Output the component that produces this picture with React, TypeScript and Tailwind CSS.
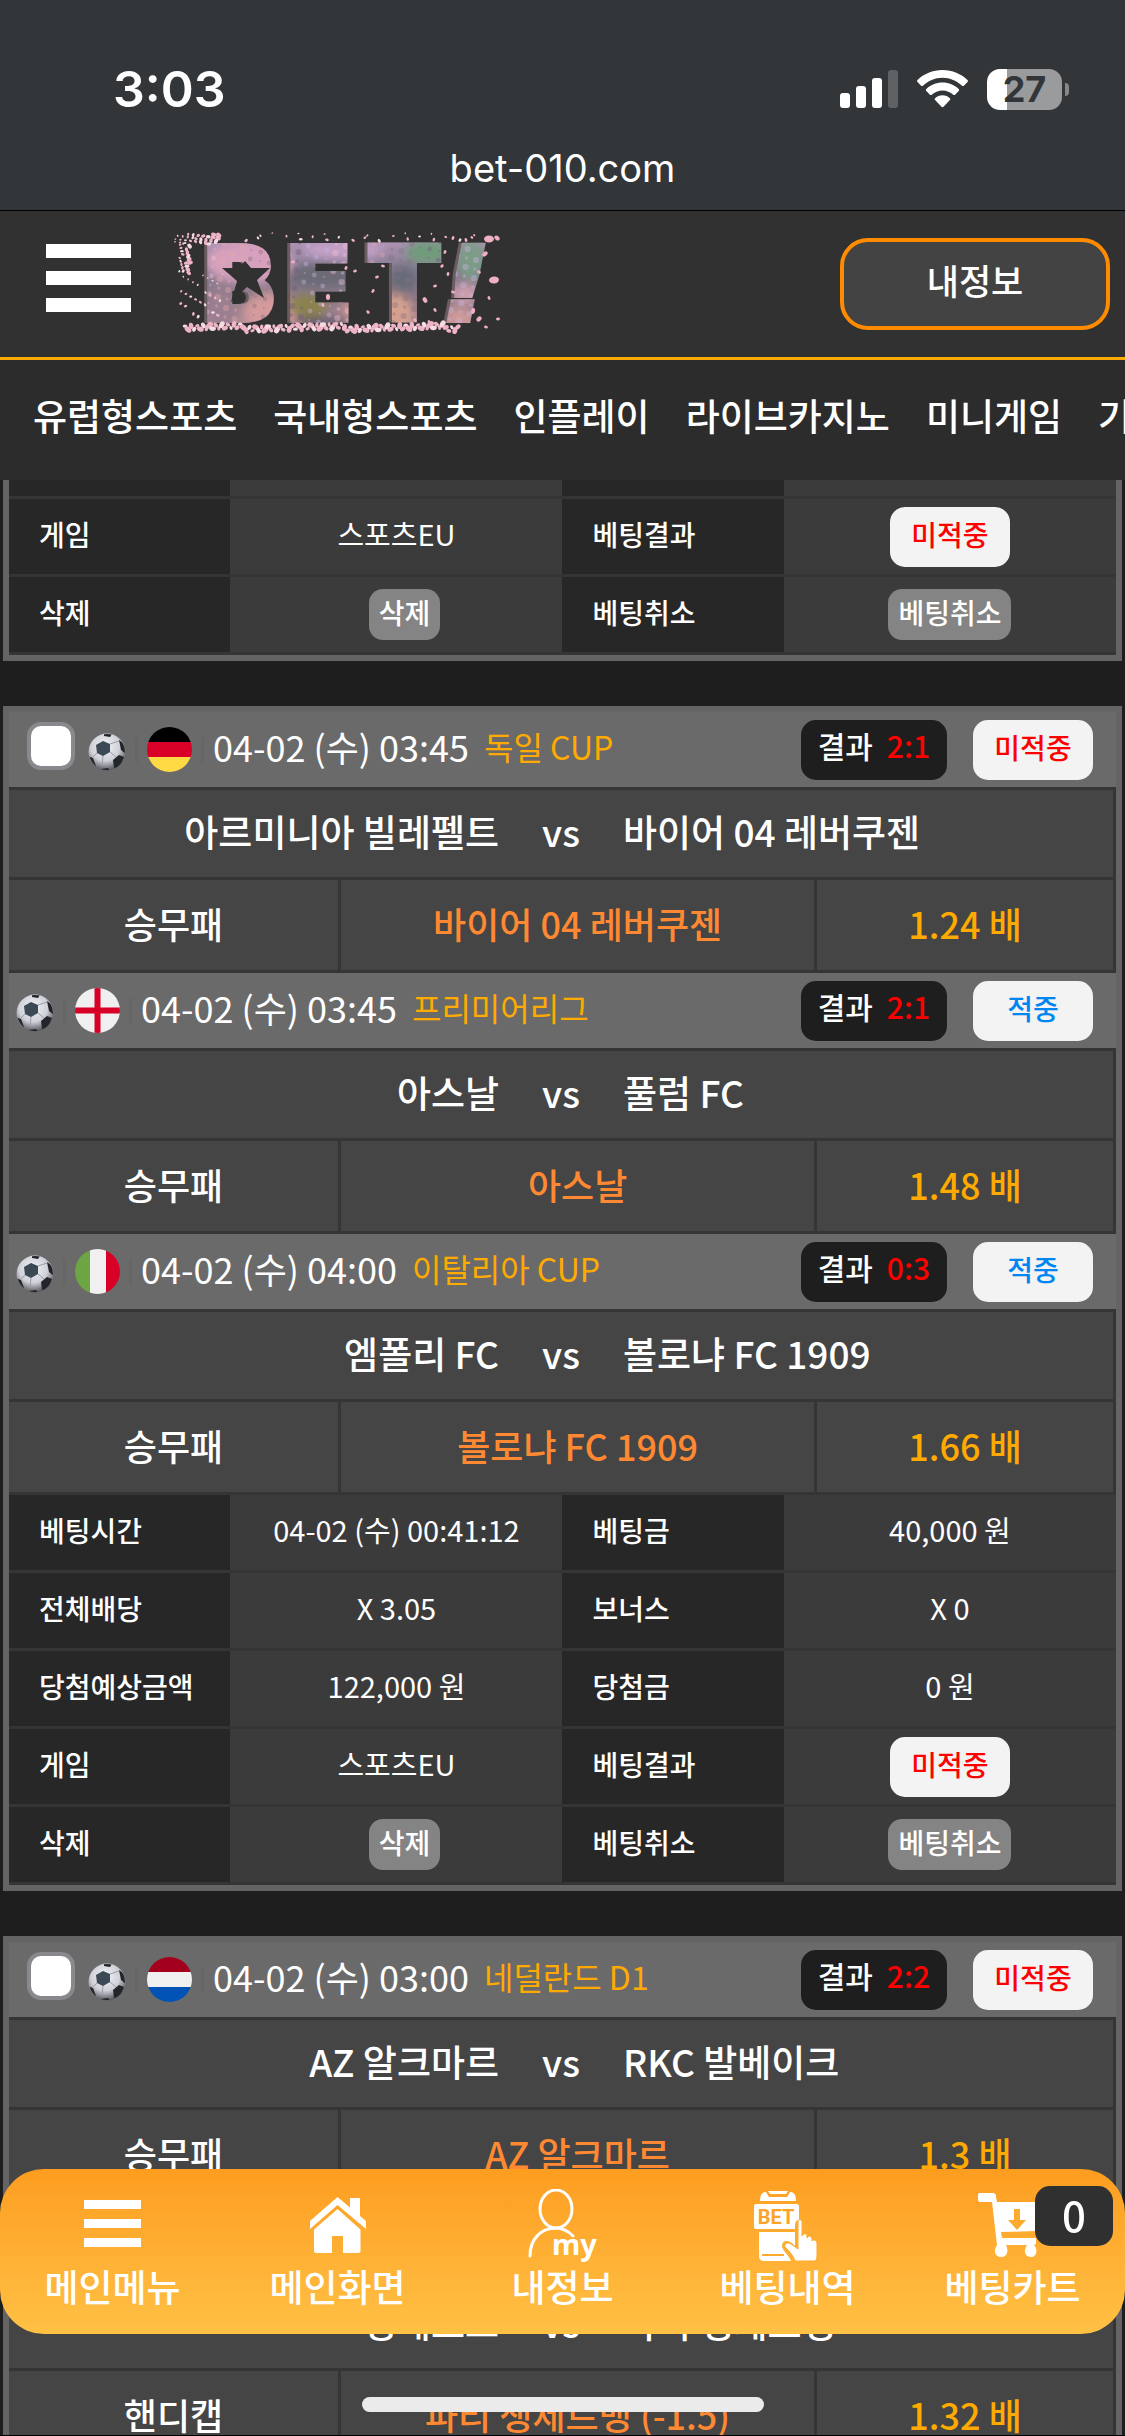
import { ReactNode } from 'react'
import { clsx } from 'clsx'

interface MatchType {
  date?: string
  league?: string
  flag?: 'de' | 'en' | 'it' | 'nl'
  score?: string
  won?: boolean
  home: string
  away: string
  market: string
  pick: string
  odds: string
}

const firstSlip: MatchType[] = [
  { date: '04-02 (수) 03:45', league: '독일 CUP', flag: 'de', score: '2:1', won: false, home: '아르미니아 빌레펠트', away: '바이어 04 레버쿠젠', market: '승무패', pick: '바이어 04 레버쿠젠', odds: '1.24' },
  { date: '04-02 (수) 03:45', league: '프리미어리그', flag: 'en', score: '2:1', won: true, home: '아스날', away: '풀럼 FC', market: '승무패', pick: '아스날', odds: '1.48' },
  { date: '04-02 (수) 04:00', league: '이탈리아 CUP', flag: 'it', score: '0:3', won: true, home: '엠폴리 FC', away: '볼로냐 FC 1909', market: '승무패', pick: '볼로냐 FC 1909', odds: '1.66' },
]

const secondSlip: MatchType[] = [
  { date: '04-02 (수) 03:00', league: '네덜란드 D1', flag: 'nl', score: '2:2', won: false, home: 'AZ 알크마르', away: 'RKC 발베이크', market: '승무패', pick: 'AZ 알크마르', odds: '1.3' },
  { home: '덩케르크', away: '파리 생제르맹', market: '핸디캡', pick: '파리 생제르맹 (-1.5)', odds: '1.32' },
]

const categories = ['유럽형스포츠', '국내형스포츠', '인플레이', '라이브카지노', '미니게임', '기타']

const StatusBar = () => (
  <div className="h-[211px] shrink-0 border-b border-black bg-[#323639] font-['Inter',sans-serif] text-white">
    <div className="flex items-center justify-between pt-[60px] pl-[113px] pr-[56px]">
      <span className="text-[50px] leading-[58px] font-semibold">3:03</span>
      <div className="flex items-center gap-[19px]">
        <svg width="58" height="38" viewBox="0 0 58 38" fill="#fff">
          <rect x="0" y="23" width="10" height="15" rx="3" />
          <rect x="16" y="16" width="10" height="22" rx="3" />
          <rect x="32" y="8" width="10" height="30" rx="3" />
          <rect x="48" y="0" width="10" height="38" rx="3" fill="#5f6264" />
        </svg>
        <svg width="51" height="38" viewBox="0 0 51 38" fill="#fff">
          <path d="M25.500 0C35.300 0 44.200 3.800 50.500 10.100c.6.600.6 1.400 0 2l-3.600 3.600c-.5.500-1.400.5-1.900 0C39.900 10.700 33 7.700 25.500 7.700S11.100 10.700 6 15.700c-.5.500-1.400.5-1.900 0L.5 12.100c-.6-.6-.6-1.400 0-2C6.800 3.800 15.700 0 25.500 0Z" />
          <path d="M25.500 12.600c6.300 0 12 2.500 16.200 6.500.6.600.6 1.500 0 2l-3.600 3.600c-.5.500-1.400.5-1.900 0-2.800-2.700-6.600-4.300-10.700-4.300s-7.900 1.600-10.700 4.300c-.5.500-1.400.5-1.900 0l-3.600-3.600c-.6-.5-.6-1.400 0-2 4.200-4 9.900-6.500 16.200-6.500Z" />
          <path d="M25.500 25.200c2.900 0 5.500 1.100 7.400 3 .6.500.6 1.400 0 1.900l-6.400 6.700c-.6.600-1.400.6-2 0l-6.400-6.700c-.6-.5-.6-1.400 0-1.900 1.900-1.900 4.500-3 7.400-3Z" />
        </svg>
        <div className="flex items-center gap-[3px]">
          <div className="flex h-[41px] w-[75px] items-center justify-center rounded-[13px] bg-linear-to-r from-white from-27% to-[#9a9b9d] to-27%">
            <span className="text-[36px] leading-[40px] font-bold text-[#323639]">27</span>
          </div>
          <div className="h-[13px] w-1 rounded-r-full bg-[#85888a]" />
        </div>
      </div>
    </div>
    <p className="pt-[26px] text-center text-[38px] leading-[48px]">bet-010.com</p>
  </div>
)

// cherry petals scattered round the logo letters
const petals = Array.from({ length: 190 }, (_, i) => {
  const a = (i * 73 + 17) % 101 / 101
  const b = (i * 47 + 29) % 97 / 97
  if (i < 90) return { x: 12 + (i / 90) * 276, y: 92 + b * 7, r: 2 + a * 2 }
  if (i < 120) return { x: 2 + a * 46, y: 2 + b * 10, r: 1 + a * 2 }
  if (i < 140) return { x: 4 + b * 14, y: 12 + a * 30, r: 1 + b * 2 }
  if (i < 165) return { x: 66 + a * 240, y: 1 + b * 8, r: 1 + b }
  return { x: 6 + a * 44, y: 42 + b * 44, r: 1 + b }
})

// blossom texture inside the letters
const speckles = Array.from({ length: 260 }, (_, i) => ({
  x: 30 + ((i * 83 + 11) % 277) * 1.05,
  y: 10 + (i * 59 + 7) % 83,
  r: 1 + (i % 4) * 0.7,
  fill: ['#f3c3d6', '#6a5a78', '#e3a7a6', '#c9b4e0', '#8a6f7c'][i % 5],
}))

const loosePetals = [
  [316, 7, 5], [324, 6, 3], [293, 8, 2], [280, 6, 2], [312, 22, 3], [321, 48, 5], [306, 40, 2], [316, 66, 2], [300, 79, 3], [306, 87, 3], [325, 87, 2],
  [313, 95, 2], [252, 68, 3], [275, 42, 2], [269, 34, 2], [262, 54, 2], [280, 60, 2], [262, 78, 2], [155, 65, 3], [200, 59, 2], [204, 45, 2], [210, 34, 2],
  [195, 80, 2], [150, 73, 2], [173, 36, 2], [182, 39, 2], [120, 30, 2], [242, 88, 2], [256, 90, 2], [272, 20, 2],
]

const Logo = () => (
  <svg width="330" height="104" viewBox="0 0 330 104" role="img" aria-label="BET!">
    <defs>
      <linearGradient id="sky" x1="0" y1="0" x2="0" y2="1">
        <stop offset="0" stopColor="#bd9cc2" />
        <stop offset="0.35" stopColor="#857c92" />
        <stop offset="0.65" stopColor="#8a7885" />
        <stop offset="1" stopColor="#c795a0" />
      </linearGradient>
      <filter id="soft"><feGaussianBlur stdDeviation="5" /></filter>
      <pattern id="blossom" width="330" height="104" patternUnits="userSpaceOnUse">
        <rect width="330" height="104" fill="url(#sky)" />
        <g filter="url(#soft)">
          <ellipse cx="76" cy="30" rx="44" ry="22" fill="#d7a0bd" />
          <ellipse cx="98" cy="80" rx="28" ry="20" fill="#d49a9c" />
          <ellipse cx="48" cy="78" rx="16" ry="24" fill="#9a7f91" />
          <ellipse cx="150" cy="44" rx="36" ry="12" fill="#6c6a76" />
          <ellipse cx="134" cy="74" rx="20" ry="12" fill="#8b8250" />
          <ellipse cx="150" cy="90" rx="30" ry="5" fill="#5d5669" />
          <ellipse cx="184" cy="78" rx="14" ry="12" fill="#cf9a90" />
          <ellipse cx="170" cy="18" rx="40" ry="9" fill="#c5a1c8" />
          <ellipse cx="254" cy="20" rx="22" ry="12" fill="#6f9b7c" />
          <ellipse cx="230" cy="48" rx="14" ry="14" fill="#686a78" />
          <ellipse cx="222" cy="82" rx="18" ry="20" fill="#d6a08f" />
          <ellipse cx="298" cy="28" rx="14" ry="20" fill="#7c9c86" />
          <ellipse cx="292" cy="62" rx="14" ry="10" fill="#cf9fae" />
          <ellipse cx="286" cy="86" rx="14" ry="10" fill="#d09a96" />
        </g>
        <g opacity="0.4">
          {speckles.map((s, i) => <circle key={i} cx={s.x} cy={s.y} r={s.r} fill={s.fill} />)}
        </g>
      </pattern>
    </defs>
    <g fontFamily="DejaVu Sans, sans-serif" fontWeight="700" fontSize="101" strokeWidth="6">
      <g fill="#6b5c60" stroke="#6b5c60">
        <text x="25" y="88">B</text>
        <text x="108" y="88">E</text>
        <text x="194" y="88">T</text>
        <text x="267" y="88" fontStyle="italic">!</text>
      </g>
      <g fill="url(#blossom)" stroke="url(#blossom)">
        <text x="28" y="88">B</text>
        <text x="111" y="88">E</text>
        <text x="197" y="88">T</text>
        <text x="270" y="88" fontStyle="italic">!</text>
      </g>
    </g>
    <polygon points="49,36 66,36 72,29 78,36 97,36 84,48 91,66 74,55 58,70 64,49" fill="#313131" />
    {petals.map((p, i) => (
      <ellipse key={i} cx={p.x} cy={p.y} rx={p.r} ry={p.r * 0.7} fill={i % 3 ? '#efb3c6' : '#f7dbe3'} transform={`rotate(${i * 40} ${p.x} ${p.y})`} />
    ))}
    {loosePetals.map(([x, y, r], i) => (
      <ellipse key={i} cx={x} cy={y} rx={r} ry={r * 0.7} fill="#f0b0c4" transform={`rotate(${i * 35} ${x} ${y})`} />
    ))}
  </svg>
)

const Header = () => (
  <header className="flex h-[149px] shrink-0 items-center border-b-3 border-[#ffaa00] bg-[#313131] pr-[15px] pl-[46px]">
    <button type="button" aria-label="메뉴" className="flex w-[85px] flex-col gap-[13px] pb-3">
      <span className="h-[14px] w-full bg-white" />
      <span className="h-[14px] w-full bg-white" />
      <span className="h-[14px] w-full bg-white" />
    </button>
    <a href="#" className="ml-[42px]"><Logo /></a>
    <button type="button" className="ml-auto h-[92px] w-[270px] rounded-[28px] border-4 border-[#ff8c00] bg-[#434343] pb-2 text-[35px] font-medium text-white">내정보</button>
  </header>
)

const Flag = ({ code }: { code: MatchType['flag'] }) => (
  <svg width="45" height="45" viewBox="0 0 45 45" className="shrink-0 rounded-full">
    {code === 'de' && <><path fill="#000" d="M0 0h45v15H0z" /><path fill="#d80027" d="M0 15h45v15H0z" /><path fill="#ffda44" d="M0 30h45v15H0z" /></>}
    {code === 'nl' && <><path fill="#a2001d" d="M0 0h45v15H0z" /><path fill="#f0f0f0" d="M0 15h45v15H0z" /><path fill="#0052b4" d="M0 30h45v15H0z" /></>}
    {code === 'it' && <><path fill="#6da544" d="M0 0h15v45H0z" /><path fill="#f0f0f0" d="M15 0h16v45H15z" /><path fill="#d80027" d="M31 0h14v45H31z" /></>}
    {code === 'en' && <><path fill="#f0f0f0" d="M0 0h45v45H0z" /><path fill="#d80027" d="M19.500 0h6v19.500H45v6H25.500V45h-6V25.500H0v-6h19.500z" /></>}
  </svg>
)

const SoccerBall = () => (
  <svg width="38" height="40" viewBox="0 0 38 40" className="mt-1 shrink-0">
    <defs>
      <radialGradient id="ball" cx="0.45" cy="0.35" r="0.65">
        <stop offset="0" stopColor="#f2f4f8" />
        <stop offset="0.6" stopColor="#cfd0d8" />
        <stop offset="1" stopColor="#55565c" />
      </radialGradient>
      <clipPath id="ballClip"><circle cx="19" cy="20" r="18" /></clipPath>
      <filter id="ballSoft"><feGaussianBlur stdDeviation="0.7" /></filter>
    </defs>
    <g filter="url(#ballSoft)">
      <circle cx="19" cy="20" r="18.500" fill="url(#ball)" />
      <g clipPath="url(#ballClip)">
        <path fill="#3b4854" d="m8 13 7-4 7 3v8l-7 4-6-3z" />
        <path fill="#22252b" d="m16 0 8 2-2 3-6-1zM31 8l7 5v9l-5-4zM0 24l5 2 3 8-2 3-6-6zM25 28l6-5 5 2-4 10-6 1zM13 37l7-1 3 4H12z" />
        <path stroke="#9a9ca6" strokeWidth="1" fill="none" d="m22 12 9-3M22 20l6 5M15 24l-1 10M9 21l-5 5" />
      </g>
    </g>
  </svg>
)

const Separator = () => <span className="h-[26px] w-[3px] shrink-0 bg-[#666]" />

const ResultBadge = ({ won }: { won?: boolean }) => (
  <span className={clsx('inline-flex h-[60px] w-[120px] items-center justify-center rounded-[15px] bg-[#f3f3f3] pb-[6px] text-[28px] font-medium', won ? 'text-[#0086f0]' : 'text-[#ff0000]')}>
    {won ? '적중' : '미적중'}
  </span>
)

const Match = ({ match, selectable }: { match: MatchType, selectable: boolean }) => (
  <section>
    <div className={clsx('flex h-[78px] items-center gap-[9px] border-b-3 border-[#353535] bg-[#6a6a6a] pr-[23px]', selectable ? 'pl-[18px]' : 'pl-[7px]')}>
      {match.date && (
        <>
          {selectable && <input type="checkbox" aria-label="베팅 선택" className="mr-1 mb-2 size-12 shrink-0 appearance-none rounded-[14px] border-4 border-[#89898d] bg-white" />}
          <SoccerBall />
          <Separator />
          <Flag code={match.flag} />
          <Separator />
          <p className="flex gap-[15px] pb-2 whitespace-nowrap text-white">
            <span className="text-[36px] leading-[48px]">{match.date}</span>
            <span className="text-[32px] leading-[48px] text-[#ffaa00]">{match.league}</span>
          </p>
          <div className="ml-auto flex gap-[26px]">
            <span className="flex h-[60px] items-center gap-[14px] rounded-[15px] bg-[#1e1e1e] px-[17px] pb-2 text-[30px] font-medium text-white">
              결과 <span className="text-[#ff0000]">{match.score}</span>
            </span>
            <ResultBadge won={match.won} />
          </div>
        </>
      )}
    </div>
    <div className="grid h-[90px] grid-cols-[1fr_124px_1fr] items-center border-r-3 border-b-3 border-[#353535] bg-[#454545] pb-1 text-[37px] font-medium text-white">
      <span className="text-right">{match.home}</span>
      <span className="text-center">vs</span>
      <span>{match.away}</span>
    </div>
    <div className="grid h-[93px] grid-cols-[30fr_43fr_27fr] border-b-3 border-[#353535] bg-[#454545] text-center text-[36px] leading-[86px] font-medium">
      <span className="border-r-3 border-[#353535] text-white">{match.market}</span>
      <span className="border-r-3 border-[#353535] text-[#ff8833]">{match.pick}</span>
      <span className="border-r-3 border-[#353535] text-[#ffaa00]">{match.odds} 배</span>
    </div>
  </section>
)

const DetailRow = ({ cells }: { cells: [string, ReactNode, string, ReactNode] }) => (
  <tr className="h-[78px]">
    {cells.map((cell, i) => i % 2 === 0
      ? <th key={i} scope="row" className="w-1/5 border-b-3 border-[#353535] bg-[#272727] pb-[6px] pl-[30px] text-left text-[28px] font-medium">{cell}</th>
      : <td key={i} className={clsx('w-3/10 border-b-3 border-[#353535] bg-[#3b3b3b] text-center text-[29px]', typeof cell === 'string' && 'pb-[6px]')}>{cell}</td>
    )}
  </tr>
)

const ActionButton = ({ children }: { children: ReactNode }) => (
  <button type="button" className="block h-[51px] rounded-[14px] bg-[#848484] px-[10px] pb-[6px] text-[28px] font-medium text-white">{children}</button>
)

const DetailTable = ({ summary }: { summary: boolean }) => (
  <table className="w-full table-fixed border-separate border-spacing-0 text-white">
    <tbody>
      {summary && (
        <>
          <DetailRow cells={['베팅시간', '04-02 (수) 00:41:12', '베팅금', '40,000 원']} />
          <DetailRow cells={['전체배당', 'X 3.05', '보너스', 'X 0']} />
          <DetailRow cells={['당첨예상금액', '122,000 원', '당첨금', '0 원']} />
        </>
      )}
      <DetailRow cells={['게임', '스포츠EU', '베팅결과', <div className="flex justify-center"><ResultBadge /></div>]} />
      <DetailRow cells={['삭제', <div className="flex justify-center pl-4"><ActionButton>삭제</ActionButton></div>, '베팅취소', <div className="flex justify-center"><ActionButton>베팅취소</ActionButton></div>]} />
    </tbody>
  </table>
)

const MenuIcon = () => (
  <svg width="70" height="70" viewBox="0 0 70 70" fill="#fff">
    <path d="M6 11h57v9H6zM6 30h57v9H6zM6 49h57v9H6z" />
  </svg>
)

const HomeIcon = () => (
  <svg width="70" height="70" viewBox="0 0 70 70" fill="#fff">
    <path d="M34.500 8 47 18.500V9h10v18l6 5v8L34.500 16 7 40v-8z" />
    <path d="m34.500 20 23 20.500V62a2 2 0 0 1-2 2H40V47H29v17H13a2 2 0 0 1-2-2V40.500z" />
  </svg>
)

const MyIcon = () => (
  <svg width="70" height="74" viewBox="0 0 70 74">
    <g fill="none" stroke="#fff" strokeWidth="3" strokeLinecap="round">
      <ellipse cx="28" cy="20" rx="16" ry="19" />
      <path d="M2 67C2 50 13 39 28 39c7 0 12 3 17 8" />
    </g>
    <text x="24" y="66" fill="#fff" fontFamily="Noto Sans, sans-serif" fontWeight="700" fontSize="29">my</text>
  </svg>
)

const BetIcon = () => (
  <svg width="70" height="74" viewBox="0 0 70 74" fill="#fff">
    <path d="M7 12c0-6 2-9 6-9l3 5h18l3-5c4 0 6 3 6 9zM15 2h20l-2 3H17z" />
    <path d="M3 15h41a2 2 0 0 1 2 2v14c-3 0-4 3-4 6v3H3a2 2 0 0 1-2-2V17a2 2 0 0 1 2-2z" />
    <path d="M6 43h36v14c-6-7-13-6-13 0 0 4 6 8 9 15H11c-3 0-5-2-5-5z" />
    <path d="M45 33c0-3 4-3 4 0v14c1-3 5-3 5 0v2c1-3 5-2 5 1v2c1-2 5-1 5 2v13c0 3-1 5-3 5H42c-2-6-6-10-10-14-1-4 3-5 6-3l7 5z" stroke="#fdab2e" strokeWidth="1" />
    <path d="M9 66h22" stroke="#fdab2e" strokeWidth="2" />
    <text x="23" y="35" textAnchor="middle" fill="#fda32a" fontFamily="Roboto, sans-serif" fontWeight="700" fontSize="20">BET</text>
  </svg>
)

const CartIcon = () => (
  <svg width="70" height="70" viewBox="0 0 70 70" fill="#fff">
    <path d="M2 4h13c2 0 3 1 3 4l1 5h45l-4 29-37 1 1 6h34v6l-2 1c4 4 3 12-3 12s-8-6-4-12H28c3 6 1 12-5 12s-8-6-4-12l-5-43H2a2 2 0 0 1-2-2V6a2 2 0 0 1 2-2z" />
    <path fill="#fdab2e" d="M36 20h6v11h6l-9 10-9-10h6zM25 45h34v3H25z" />
  </svg>
)

const tabs = [
  { label: '메인메뉴', icon: <MenuIcon /> },
  { label: '메인화면', icon: <HomeIcon /> },
  { label: '내정보', icon: <MyIcon /> },
  { label: '베팅내역', icon: <BetIcon /> },
  { label: '베팅카트', icon: <CartIcon /> },
]

const TabBar = () => (
  <nav className="fixed inset-x-0 bottom-[102px] grid h-[165px] grid-cols-5 rounded-[44px] bg-linear-to-b from-[#fd9d1f] to-[#ffc144] text-white">
    {tabs.map(({ label, icon }) => (
      <a key={label} href="#" className="relative flex flex-col items-center pt-5 text-[37px] leading-[46px] font-medium">
        <span className="flex h-[74px] items-start">{icon}</span>
        {label}
        {label === '베팅카트' && (
          <span className="absolute top-[17px] right-3 flex h-[60px] w-[78px] items-center justify-center rounded-[15px] bg-[#303030] pb-1 text-[42px]">0</span>
        )}
      </a>
    ))}
  </nav>
)

const App = () => {
  return (
    <div className="flex h-screen flex-col overflow-hidden border-b border-black bg-[#1e1e1e] font-['Noto_Sans_CJK_KR',sans-serif]">
      <StatusBar />
      <Header />
      <nav className="flex h-[120px] shrink-0 gap-9 overflow-hidden bg-[#2c2c2c] pl-[33px] text-[37px] leading-[110px] font-medium whitespace-nowrap text-white">
        {categories.map((name) => <a key={name} href="#">{name}</a>)}
      </nav>
      <main className="flex min-h-0 flex-1 flex-col gap-[45px] overflow-hidden px-[3px]">
        <article className="shrink-0 border-x-6 border-b-6 border-[#646464]">
          <div className="grid h-[19px] grid-cols-[20fr_30fr_20fr_30fr] border-b-3 border-[#353535]">
            <span className="bg-[#272727]" />
            <span className="bg-[#3b3b3b]" />
            <span className="bg-[#272727]" />
            <span className="bg-[#3b3b3b]" />
          </div>
          <DetailTable summary={false} />
        </article>
        <article className="shrink-0 border-6 border-[#646464]">
          {firstSlip.map((match, i) => <Match key={match.home} match={match} selectable={i === 0} />)}
          <DetailTable summary />
        </article>
        <article className="shrink-0 border-6 border-[#646464]">
          {secondSlip.map((match, i) => <Match key={match.home} match={match} selectable={i === 0} />)}
        </article>
      </main>
      <TabBar />
      <div className="fixed bottom-6 left-1/2 h-[15px] w-[402px] -translate-x-1/2 rounded-full bg-[#ebebeb]" />
    </div>
  )
}

export default App
